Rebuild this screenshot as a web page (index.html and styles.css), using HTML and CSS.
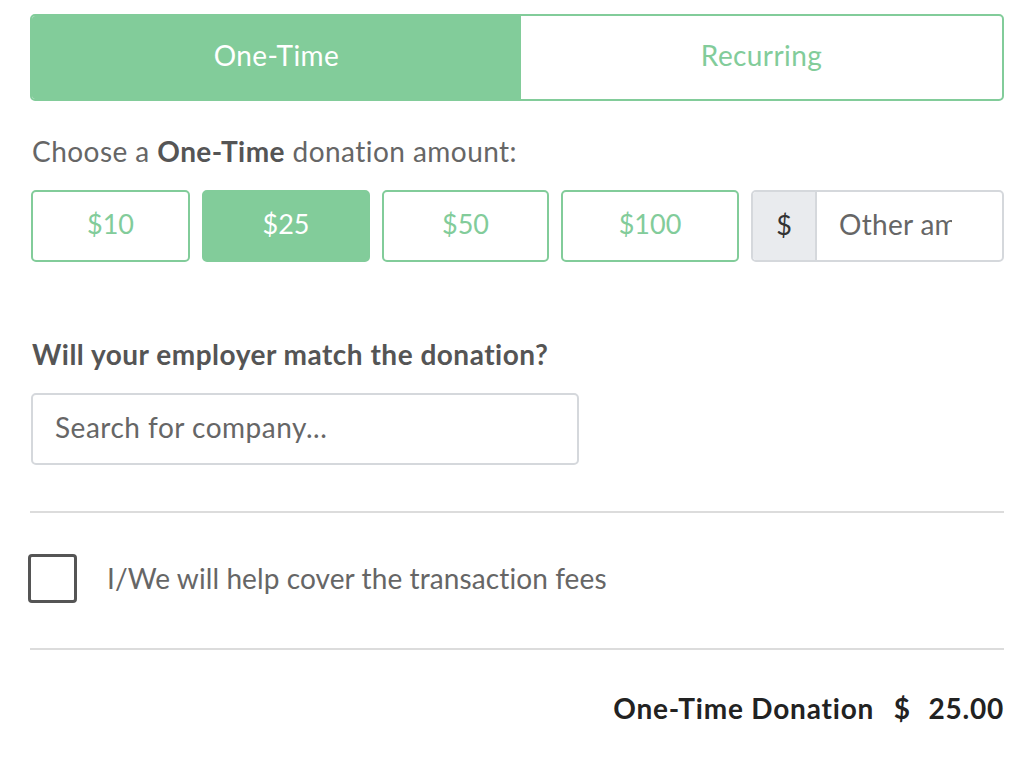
FILE: index.html
```html
<!DOCTYPE html>
<html>
<head>
<meta charset="utf-8">
<link rel="stylesheet" href="styles.css">
</head>
<body>
<div class="form">
  <div class="tabs">
    <div class="tab tab-active">One-Time</div>
    <div class="tab">Recurring</div>
  </div>
  <div class="prompt">Choose a <b>One-Time</b> donation amount:</div>
  <div class="amounts">
    <div class="amt">$10</div>
    <div class="amt amt-active">$25</div>
    <div class="amt">$50</div>
    <div class="amt">$100</div>
    <div class="other">
      <span class="addon">$</span>
      <span class="other-input"><span class="other-clip">Other amount</span></span>
    </div>
  </div>
  <div class="heading">Will your employer match the donation?</div>
  <div class="search">Search for company...</div>
  <div class="rule"></div>
  <div class="check-row">
    <span class="checkbox"></span>
    <span class="check-label">I/We will help cover the transaction fees</span>
  </div>
  <div class="rule rule-2"></div>
  <div class="total">One-Time Donation <span class="cur">$</span> 25.00</div>
</div>
</body>
</html>
```

FILE: styles.css
```css
html, body {
  margin: 0;
  padding: 0;
  background: #fff;
}
body {
  font-family: Lato, "Open Sans", sans-serif;
  color: #666;
}
.form {
  width: 974px;
  margin-left: 30px;
  padding-top: 14px;
}
.tabs {
  display: flex;
  height: 87px;
  box-sizing: border-box;
  border: 2px solid #82cc9a;
  border-radius: 5px;
  overflow: hidden;
}
.tab {
  flex: 1;
  display: flex;
  align-items: center;
  justify-content: center;
  font-size: 28px;
  letter-spacing: 0.4px;
  color: #82cc9a;
  padding-bottom: 6px;
}
.tab-active {
  flex: 0 0 489px;
  background: #82cc9a;
  color: #fff;
}
.prompt {
  margin-top: 34px;
  line-height: 32px;
  font-size: 28px;
  letter-spacing: 0.45px;
  padding-left: 2px;
  color: #666;
}
.prompt b {
  color: #555;
}
.amounts {
  margin-top: 23px;
  display: grid;
  grid-template-columns: 159px 168px 167px 178px 1fr;
  gap: 12px;
  height: 72px;
  padding-left: 1px;
}
.amt {
  box-sizing: border-box;
  border: 2px solid #82cc9a;
  border-radius: 5px;
  color: #82cc9a;
  font-size: 27px;
  display: flex;
  align-items: center;
  justify-content: center;
  padding-bottom: 5px;
}
.amt-active {
  background: #82cc9a;
  color: #fff;
}
.other {
  box-sizing: border-box;
  border: 2px solid #d5d8dc;
  border-radius: 5px;
  display: flex;
  overflow: hidden;
}
.addon {
  flex: 0 0 62px;
  background: #e9ebee;
  border-right: 2px solid #d5d8dc;
  display: flex;
  align-items: center;
  justify-content: center;
  font-size: 27px;
  color: #333;
  padding-bottom: 4px;
}
.other-input {
  flex: 1;
  display: flex;
  align-items: center;
  padding-left: 22px;
  padding-bottom: 4px;
  font-size: 28px;
  letter-spacing: 0.3px;
  color: #666;
}
.other-clip {
  width: 113px;
  white-space: nowrap;
  overflow: hidden;
}
.heading {
  margin-top: 76px;
  line-height: 32px;
  font-size: 28px;
  letter-spacing: 0.5px;
  font-weight: bold;
  color: #555;
  padding-left: 2px;
}
.search {
  margin-top: 23px;
  width: 548px;
  height: 72px;
  box-sizing: border-box;
  border: 2px solid #d5d8dc;
  border-radius: 5px;
  display: flex;
  align-items: center;
  padding-left: 22px;
  padding-bottom: 4px;
  font-size: 28px;
  letter-spacing: 0.5px;
  color: #666;
  margin-left: 1px;
}
.rule {
  margin-top: 46px;
  height: 2px;
  background: #dcdcdc;
}
.check-row {
  margin-top: 41px;
  display: flex;
  align-items: center;
  height: 49px;
}
.checkbox {
  width: 49px;
  height: 49px;
  box-sizing: border-box;
  border: 3px solid #555;
  border-radius: 4px;
  margin-left: -2px;
}
.check-label {
  margin-left: 30px;
  font-size: 28px;
  letter-spacing: 0.1px;
  color: #666;
  padding-bottom: 2px;
}
.rule-2 {
  margin-top: 45px;
}
.total {
  margin-top: 42px;
  line-height: 32px;
  text-align: right;
  font-size: 28px;
  letter-spacing: 0.8px;
  font-weight: bold;
  color: #222;
}
.cur {
  margin: 0 10px 0 12px;
}
```
